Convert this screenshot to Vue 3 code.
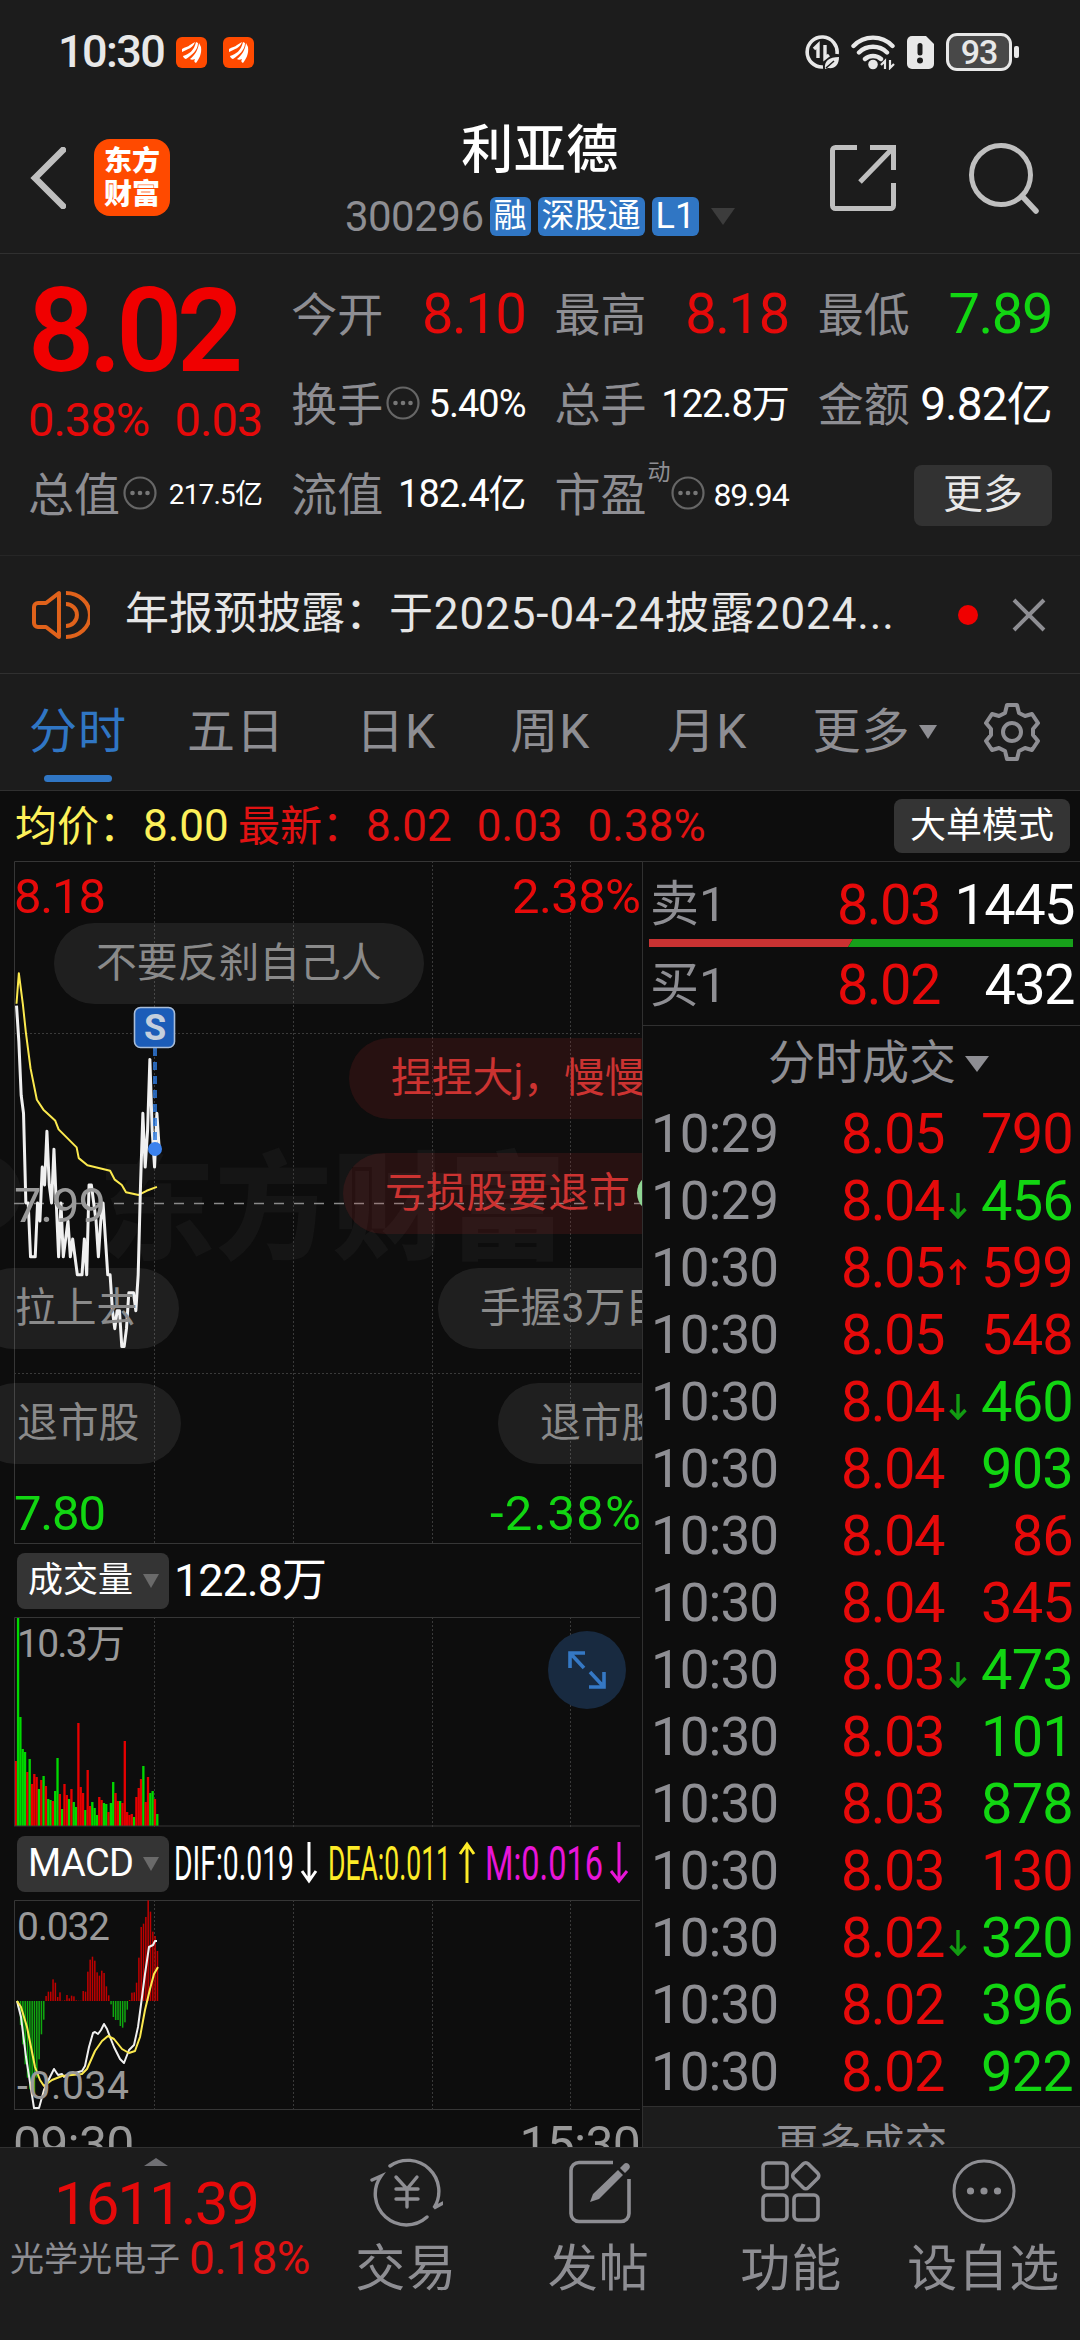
<!-- 个股行情页 - 分时走势 -->
<template>
  <div class="page">
    <!-- 系统状态栏 -->
    <div class="status-bar">
      <span class="clock">10:30</span>
      <svg v-for="n in 2" :key="n" class="app-badge" viewBox="0 0 31 31">
        <rect width="31" height="31" rx="6" fill="#ff4a00" />
        <path d="M6 12c3-2 6-2 8-4l5-3c-2 6-7 7-13 10zM7 19c6-2 11-5 13-14l2 1c0 7-6 12-12 16-1 0-3-2-3-3zM14 22c5-4 8-9 9-16l2 4c1 7-2 12-5 16-2-1-2-2-1-4-2 1-4 1-5 0z" fill="#fff" />
      </svg>
      <div class="status-icons">
        <svg class="icon-data" viewBox="0 0 34 34">
          <path d="M32 19A15 15 0 1 0 18 32" fill="none" stroke="#e8e8e8" stroke-width="3.6" />
          <path d="M9 14l4-4v13M24 20l-4 3V10" fill="none" stroke="#e8e8e8" stroke-width="3.4" />
          <path d="M20 34c-1-8 4-12 14-12 0 8-4 12-11 11z" fill="#e8e8e8" />
          <path d="M21 33l8-7" stroke="#1c1c1c" stroke-width="1.5" />
        </svg>
        <svg class="icon-wifi" viewBox="0 0 44 36">
          <g fill="none" stroke="#e8e8e8" stroke-width="4.4" stroke-linecap="round">
            <path d="M2.5 12a27 27 0 0 1 39 0M8 18.500a20 20 0 0 1 28 0M14 25a12 12 0 0 1 16 0" />
          </g>
          <circle cx="22" cy="30.500" r="4.800" fill="#e8e8e8" />
          <path d="M30 31l4-4v8M43 30l-4 4v-8" fill="none" stroke="#e8e8e8" stroke-width="2.2" />
        </svg>
        <svg class="icon-sim" viewBox="0 0 27 33">
          <path d="M5 0h14l8 8v20a5 5 0 0 1-5 5H5a5 5 0 0 1-5-5V5a5 5 0 0 1 5-5z" fill="#e8e8e8" />
          <path d="M13 9.500v7.500" stroke="#1c1c1c" stroke-width="5" stroke-linecap="round" />
          <circle cx="13" cy="24.500" r="3" fill="#1c1c1c" />
        </svg>
        <div class="battery"><span>93</span></div>
      </div>
    </div>

    <!-- 标题栏 -->
    <header class="header">
      <div class="header-left">
        <svg class="icon-back" viewBox="0 0 36 62">
          <path d="M33 3L5 31l28 28" fill="none" stroke="#bfbfbf" stroke-width="6.500" stroke-linecap="round" />
        </svg>
        <div class="logo"><span>东方</span><span>财富</span></div>
      </div>
      <div class="header-title">
        <h1>利亚德</h1>
        <div class="sub">
          <span class="code">300296</span>
          <span v-for="tag in tags" :key="tag" class="tag">{{ tag }}</span>
          <i class="sub-caret"></i>
        </div>
      </div>
      <div class="header-right">
        <svg class="icon-share" viewBox="0 0 66 66">
          <g fill="none" stroke="#bfbfbf" stroke-width="5">
            <path d="M27 2.500H5.500a3 3 0 0 0-3 3v55a3 3 0 0 0 3 3h55a3 3 0 0 0 3-3V38" />
            <path d="M40 2.500h23.500V25M62 4L30 37" />
          </g>
        </svg>
        <svg class="icon-search" viewBox="0 0 72 74">
          <circle cx="33" cy="34" r="29.500" fill="none" stroke="#bfbfbf" stroke-width="5" />
          <path d="M54 55l14 15" stroke="#bfbfbf" stroke-width="5.500" stroke-linecap="round" />
        </svg>
      </div>
    </header>

    <!-- 盘口数据 -->
    <section class="quote">
      <div class="quote-main">
        <div class="last-price">8.02</div>
        <div class="change"><span>0.38%</span><span>0.03</span></div>
      </div>
      <div v-for="item in quotes" :key="item.label" class="quote-item">
        <span class="label">{{ item.label }}</span>
        <sup v-if="item.sup">{{ item.sup }}</sup>
        <svg v-if="item.tip" class="icon-tip" viewBox="0 0 34 34">
          <circle cx="17" cy="17" r="15.500" fill="none" stroke="#666" stroke-width="2.200" />
          <circle v-for="x in [9.5, 17, 24.5]" :key="x" :cx="x" cy="17" r="2.300" fill="#777" />
        </svg>
        <span class="value" :class="[item.size, item.color]">{{ item.value }}</span>
      </div>
      <div class="more-cell"><span class="more-btn">更多</span></div>
    </section>

    <!-- 公告 -->
    <section class="notice">
      <svg class="icon-speaker" viewBox="0 0 58 50">
        <g fill="none" stroke="#e0621b" stroke-width="4" stroke-linejoin="round">
          <path d="M27 3v44L14 37H6a4 4 0 0 1-4-4V17a4 4 0 0 1 4-4h8z" />
          <path d="M34 3a24 22 0 0 1 0 44M34 14a11 11 0 0 1 0 22" />
        </g>
      </svg>
      <span class="notice-text">年报预披露：<em>于2025-04-24披露2024...</em></span>
      <i class="notice-dot"></i>
      <svg class="icon-close" viewBox="0 0 34 34">
        <path d="M2 2l30 30M32 2L2 32" stroke="#8e8e93" stroke-width="4" />
      </svg>
    </section>

    <!-- 周期切换 -->
    <nav class="tabs">
      <span v-for="(tab, i) in tabs" :key="tab" class="tab" :class="{ active: i === 0 }">{{ tab }}</span>
      <i class="tab-caret"></i>
      <svg class="icon-gear" viewBox="0 0 56 58">
        <g fill="none" stroke="#8e8e93" stroke-width="4" stroke-linejoin="round">
          <path d="M23 2h10l2 8 6 3 7-2 6 9-5 6v6l5 6-6 9-7-2-6 3-2 8H23l-2-8-6-3-7 2-6-9 5-6v-6l-5-6 6-9 7 2 6-3z" />
          <circle cx="28" cy="29" r="9" />
        </g>
      </svg>
    </nav>

    <div class="summary">
      <span class="avg"><em>均价：</em>8.00</span>
      <span class="latest"><em>最新：</em><b>8.02</b><b>0.03</b><b>0.38%</b></span>
      <span class="mode-btn">大单模式</span>
    </div>

    <div class="body">
      <div class="charts">
        <!-- 分时图 -->
        <div class="price-chart">
          <svg width="642" height="683" viewBox="0 0 642 683">
            <circle cx="-18" cy="332" r="39" fill="#161616" />
            <text x="98" y="389" class="watermark" textLength="468">东方财富</text>
            <path :d="gridPath(683)" class="grid" />
            <path d="M14 172.500H641M14 512.500H641" class="grid" />
            <path d="M14.500 683V.5H642M14 682.500H641" class="frame" />
            <path d="M14 342.500H641" stroke="#8a8a8a" stroke-width="1.6" stroke-dasharray="10 10" />
            <polyline :points="avgPoints" class="line yellow" />
            <polyline :points="pricePoints" class="line white thick" />
            <path d="M155 187V288" stroke="#2f7be0" stroke-width="4" stroke-dasharray="8 6" opacity=".8" />
            <circle cx="155" cy="288" r="7" fill="#3b82ee" />
            <rect x="134.500" y="146.500" width="40" height="40" rx="6" fill="#1b5cb8" stroke="#a9bdd8" stroke-width="1.6" />
            <text x="155" y="179" text-anchor="middle" class="sell-mark">S</text>
            <text x="14" y="52" class="axis red" textLength="92">8.18</text>
            <text x="641" y="52" class="axis red" text-anchor="end" textLength="129">2.38%</text>
            <text x="14" y="361" class="axis gray" textLength="92">7.99</text>
            <text x="14" y="669" class="axis green" textLength="92">7.80</text>
            <text x="641" y="669" class="axis green" text-anchor="end" textLength="151">-2.38%</text>
          </svg>
          <span v-for="b in bullets" :key="b.cls" class="bullet" :class="b.cls">{{ b.text }}<i v-if="b.emoji"></i></span>
        </div>

        <!-- 成交量 -->
        <div class="panel-head">
          <span class="picker">成交量<i></i></span>
          <span class="volume-total">122.8万</span>
        </div>
        <svg class="block" width="642" height="210" viewBox="0 0 642 210">
          <path :d="gridPath(210)" class="grid" />
          <rect v-for="(v, i) in volumes" :key="i" :x="14.6 + i * 2.32" :y="209 - Math.abs(v)" width="2.320" :height="Math.abs(v)" :fill="v > 0 ? '#e60000' : '#00d800'" />
          <path d="M14.500 209V.5H640M14 209H640" class="frame" />
          <text x="17" y="40" class="sub-axis" textLength="108">10.3万</text>
          <circle cx="587" cy="53" r="39" fill="#182a40" />
          <g fill="none" stroke="#3578c4" stroke-width="3.600">
            <path d="M585 36h-15v15M570 36l14 15M589 70h15V55M604 70l-14-15" />
          </g>
        </svg>

        <!-- MACD -->
        <div class="panel-head">
          <span class="picker macd">MACD<i></i></span>
          <svg class="block" width="466" height="56" viewBox="0 0 466 56">
            <g class="macd-values">
              <text x="0" y="44" fill="#fff" textLength="120" lengthAdjust="spacingAndGlyphs">DIF:0.019</text>
              <text x="154" y="44" fill="#fdeb27" textLength="123" lengthAdjust="spacingAndGlyphs">DEA:0.011</text>
              <text x="311" y="44" fill="#e815d8" textLength="118" lengthAdjust="spacingAndGlyphs">M:0.016</text>
            </g>
            <g fill="none" stroke-width="3">
              <path d="M135 6v38M128 35l7 10 7-10" stroke="#fff" />
              <path d="M293 47V8M286 18l7-10 7 10" stroke="#fdeb27" />
              <path d="M445 6v38M437 35l8 10 8-10" stroke="#e815d8" />
            </g>
          </svg>
        </div>
        <svg class="block" width="642" height="210" viewBox="0 0 642 210">
          <path :d="gridPath(210)" class="grid" />
          <path d="M14.500 210V.5H640M14 209.500H640" class="frame" />
          <rect v-for="(v, i) in macdBars" :key="i" :x="17.5 + i * 2.32" :y="v > 0 ? 101 - v / 3 : 101" width="1.500" :height="Math.abs(v) / 3" :fill="v > 0 ? '#c00000' : '#10a810'" />
          <polyline :points="difPoints" class="line white" />
          <polyline :points="deaPoints" class="line yellow" />
          <text x="17" y="40" class="sub-axis" textLength="93">0.032</text>
          <text x="17" y="199" class="sub-axis" textLength="112">-0.034</text>
        </svg>
        <div class="time-axis"><span>09:30</span><span>15:30</span></div>
      </div>

      <!-- 买卖盘与成交明细 -->
      <aside class="trades">
        <div class="book-row"><span class="side">卖1</span><span class="price">8.03</span><span class="lots">1445</span></div>
        <svg class="ratio" viewBox="0 0 424 8">
          <path d="M0 0h204l-5 8H0z" fill="#c93232" />
          <path d="M204 0h220v8H199z" fill="#17a01a" />
        </svg>
        <div class="book-row"><span class="side">买1</span><span class="price">8.02</span><span class="lots">432</span></div>
        <div class="trades-title">分时成交<i></i></div>
        <div class="trade-list">
          <div v-for="(t, i) in trades" :key="i" class="trade-row">
            <span class="time">{{ t[0] }}</span>
            <span class="price">{{ t[1] }}</span>
            <span class="arrow">
              <svg v-if="t[3]" :class="t[3]" viewBox="0 0 18 27">
                <path d="M9 1v24M1.500 17L9 25l7.500-8" fill="none" stroke-width="3.400" />
              </svg>
            </span>
            <span class="lots" :class="t[2] > 0 ? 'red' : 'green'">{{ Math.abs(t[2]) }}</span>
          </div>
        </div>
        <div class="more-trades">更多成交</div>
      </aside>
    </div>

    <!-- 底部操作栏 -->
    <footer class="footer">
      <div class="index-box">
        <i class="index-caret"></i>
        <div class="index-value">1611.39</div>
        <div class="index-name"><span>光学光电子</span><b>0.18%</b></div>
      </div>
      <div class="action">
        <svg viewBox="0 0 74 74">
          <g fill="none" stroke="#8e8e93" stroke-width="3.400" stroke-linecap="round">
            <path d="M21 12a31 31 0 0 1 44 42l9-5M58 63A31 31 0 0 1 12 22l-9 4" />
            <path d="M27 23l11 12 10-12M38 35v18M27 35h22M27 45h22" />
          </g>
        </svg>
        <span>交易</span>
      </div>
      <div class="action">
        <svg viewBox="0 0 74 74">
          <path d="M51 8.500H17a8 8 0 0 0-8 8v43a8 8 0 0 0 8 8h42a8 8 0 0 0 8-8V25" fill="none" stroke="#8e8e93" stroke-width="3.600" />
          <path d="M28 48l3-8 25-24 5 5-24 24zM58 14l4-4c3-3 8 2 5 5l-4 4z" fill="#8e8e93" />
        </svg>
        <span>发帖</span>
      </div>
      <div class="action">
        <svg viewBox="0 0 74 74">
          <g fill="none" stroke="#8e8e93" stroke-width="3.600">
            <rect x="9" y="9" width="24" height="25" rx="4" />
            <rect x="9" y="41" width="24" height="25" rx="4" />
            <rect x="40" y="41" width="24" height="25" rx="4" />
            <rect x="41.500" y="11.500" width="20.500" height="20.500" rx="3.500" transform="rotate(45 51.750 21.750)" />
          </g>
        </svg>
        <span>功能</span>
      </div>
      <div class="action">
        <svg viewBox="0 0 74 74">
          <circle cx="37" cy="37" r="30" fill="none" stroke="#8e8e93" stroke-width="3" />
          <circle v-for="x in [23.5, 37, 50.5]" :key="x" :cx="x" cy="37" r="3.600" fill="#8e8e93" />
        </svg>
        <span>设自选</span>
      </div>
    </footer>
  </div>
</template>

<script setup>
import { computed } from 'vue';

const tags = ['融', '深股通', 'L1'];
const tabs = ['分时', '五日', '日K', '周K', '月K', '更多'];

const quotes = [
  { label: '今开', value: '8.10', size: 'xl', color: 'red' },
  { label: '最高', value: '8.18', size: 'xl', color: 'red' },
  { label: '最低', value: '7.89', size: 'xl', color: 'green' },
  { label: '换手', value: '5.40%', size: 'md', tip: true },
  { label: '总手', value: '122.8万', size: 'md' },
  { label: '金额', value: '9.82亿', size: 'lg' },
  { label: '总值', value: '217.5亿', size: 'xs', tip: true },
  { label: '流值', value: '182.4亿', size: 'md' },
  { label: '市盈', value: '89.94', size: 'sm', sup: '动', tip: true },
];

// 弹幕
const bullets = [
  { cls: 'b1', text: '不要反刹自己人' },
  { cls: 'b2 hot', text: '捏捏大j，慢慢' },
  { cls: 'b3 hot', text: '亏损股要退市', emoji: true },
  { cls: 'b4', text: '拉上去' },
  { cls: 'b5', text: '手握3万目标' },
  { cls: 'b6', text: '退市股' },
  { cls: 'b7', text: '退市股' },
];

// 每分钟价格，单位为相对昨收 7.99 的分
const prices = [
  11, 9, 6, 5, 0, 0, -3, -3, -3, 0, -1, 2, 1, 4, 1, 0, 3, 0, -3, 0, -3,
  -2, -1, -3, -2, -3, -4, -4, -4, -2, -4, 1, 1, 0, -1, -3, -1, 0, -2, -4, -4,
  -6, -7, -6, -6, -8, -8, -7, -5, -5, -5, -6, -4, 1, 5, 2, 4, 8, 4, 2, 5, 3,
];

const averages = [
  [0, 11.1], [1, 12.8], [2.7, 11.1], [4, 9.5], [6, 7.5], [8.7, 5.75], [11.5, 5.2],
  [16.5, 4.6], [18, 4.1], [25.7, 3.1], [26.6, 2.5], [30.3, 2.1], [40, 1.8], [42, 1.3],
  [45, 1], [46.8, 0.6], [52.2, 0.45], [55.6, 0.68], [60, 0.9],
];

// 正数为红柱，负数为绿柱
const volumes = [
  65, -208, -109, -77, -74, 54, -67, 42, 52, 49, -37, 46, -50, 40, -27, -26, 25, -35, -68, 32, -17,
  42, 31, -27, 37, -24, -19, 103, 39, 33, -16, 56, 20, -24, -18, -11, 29, 26, -23, -22, 14,
  -23, -44, 33, 25, -25, 23, 85, 14, 11, 12, -9, 29, 38, 47, -60, 24, 49, -33, -35, 27, -12,
];

const macdBars = [
  -20, -72, -130, -190, -230, -265, -280, -278, -230, -175, -100, -56, 15, 28, 28, 65, 55, 12, 26, 1, 2,
  18, 8, 16, 14, 2, 1, 1, 30, 28, 88, 124, 133, 121, 86, 76, 91, 84, 44, 17, -10,
  -48, -57, -57, -75, -80, -64, -26, 3, 25, 26, 55, 130, 222, 232, 252, 302, 268, 208, 195, 150,
];

const dif = [
  [17, 101], [21, 117], [26, 157], [34, 208], [39, 208], [44, 190], [48, 181], [54, 169], [58, 175],
  [62, 174], [64, 177], [68, 174], [75, 173], [82, 171], [85, 166], [89, 147], [93, 133], [95, 132],
  [98, 134], [101, 130], [104, 124], [107, 129], [110, 137], [114, 147], [120, 159], [124, 163],
  [129, 150], [134, 145], [138, 127], [142, 97], [145, 74], [149, 47], [153, 45], [155, 41], [157, 41],
];

const dea = [
  [17, 101], [21, 107], [27, 127], [35, 167], [40, 180], [44, 186], [52, 180], [62, 176], [82, 174],
  [87, 169], [95, 151], [102, 141], [108, 136], [114, 139], [122, 149], [129, 153], [135, 151],
  [140, 137], [145, 110], [150, 89], [154, 74], [158, 67],
];

const trades = [
  ['10:29', '8.05', 790],
  ['10:29', '8.04', -456, 'down'],
  ['10:30', '8.05', 599, 'up'],
  ['10:30', '8.05', 548],
  ['10:30', '8.04', -460, 'down'],
  ['10:30', '8.04', -903],
  ['10:30', '8.04', 86],
  ['10:30', '8.04', 345],
  ['10:30', '8.03', -473, 'down'],
  ['10:30', '8.03', -101],
  ['10:30', '8.03', -878],
  ['10:30', '8.03', 130],
  ['10:30', '8.02', -320, 'down'],
  ['10:30', '8.02', -396],
  ['10:30', '8.02', -922],
];

const toPoint = (minute, cents) => `${16.5 + minute * 2.34},${342 - cents * 17.95}`;
const pricePoints = computed(() => prices.map((v, i) => toPoint(i, v)).join(' '));
const avgPoints = computed(() => averages.map(([m, v]) => toPoint(m, v)).join(' '));
const difPoints = computed(() => dif.join(' '));
const deaPoints = computed(() => dea.join(' '));

const gridPath = (height) => [154.5, 293.5, 432.5, 570.5].map((x) => `M${x} 0V${height}`).join('');
</script>

<style>
body {
  background: #1c1c1c;
}
</style>

<style scoped>
.page {
  width: 1080px;
  height: 2340px;
  overflow: hidden;
  background: #1c1c1c;
  color: #fff;
  font-family: Roboto, 'Noto Sans CJK SC', sans-serif;
  line-height: 1.2;
  display: flex;
  flex-direction: column;
}

.page * {
  box-sizing: border-box;
}

i,
em {
  font-style: normal;
}

b {
  font-weight: 400;
}

span {
  white-space: nowrap;
}

.red {
  color: #e60a0a;
  fill: #e60a0a;
}

.green {
  color: #12d612;
  fill: #12d612;
}

.status-bar {
  height: 104px;
  padding: 0 61px 0 58px;
  display: flex;
  align-items: center;
}

.clock {
  width: 118px;
  font-size: 45px;
  letter-spacing: -1.6px;
  color: #e8e8e8;
  font-weight: 500;
}

.app-badge {
  width: 31px;
  height: 31px;
  margin-right: 16px;
}

.status-icons {
  margin-left: auto;
  display: flex;
  align-items: center;
  gap: 12px;
}

.icon-data {
  width: 34px;
  height: 34px;
}

.icon-wifi {
  width: 44px;
  height: 36px;
}

.icon-sim {
  width: 27px;
  height: 33px;
}

.battery {
  position: relative;
  width: 66px;
  height: 38px;
  margin-right: 7px;
  border: 3px solid #e8e8e8;
  border-radius: 11px;
  background: #484848;
  display: flex;
  align-items: center;
  justify-content: center;
  font-size: 34px;
  font-weight: 500;
  line-height: 1;
  letter-spacing: -1px;
  color: #e8e8e8;
}

.battery::after {
  content: '';
  position: absolute;
  right: -10px;
  top: 10px;
  width: 5px;
  height: 12px;
  border-radius: 2px;
  background: #e8e8e8;
}

.header {
  height: 150px;
  padding: 0 40px 0 30px;
  border-bottom: 1px solid #303030;
  display: grid;
  grid-template-columns: 1fr 400px 1fr;
}

.header-left,
.header-right {
  display: flex;
  align-items: center;
  padding-bottom: 2px;
}

.icon-back {
  width: 36px;
  height: 62px;
  margin-right: 28px;
}

.logo {
  width: 76px;
  height: 77px;
  border-radius: 16px;
  background: #ff4a00;
  display: flex;
  flex-direction: column;
  align-items: center;
  justify-content: center;
  font-size: 28px;
  font-weight: 900;
  line-height: 33px;
}

.header-title {
  display: flex;
  flex-direction: column;
  padding: 14px 0 0 10px;
}

h1 {
  margin: 0;
  font-size: 52px;
  line-height: 66px;
  font-weight: 500;
  letter-spacing: 0.5px;
  text-align: center;
}

.sub {
  display: flex;
  align-items: center;
  justify-content: center;
  height: 39px;
  margin-top: 13px;
}

.code {
  font-size: 42px;
  line-height: 39px;
  letter-spacing: -0.5px;
  color: #8e8e93;
  margin-right: 6px;
}

.tag {
  height: 39px;
  padding: 0 4px;
  margin-right: 7px;
  border-radius: 6px;
  background: #3076c4;
  font-size: 33px;
  line-height: 38px;
}

.tag:nth-of-type(4) {
  font-size: 36px;
}

.sub-caret {
  margin-left: 5px;
  border: 12px solid transparent;
  border-top: 17px solid #3c3c3c;
  border-bottom: 0;
}

.header-right {
  justify-content: flex-end;
}

.icon-share {
  width: 66px;
  height: 66px;
  margin-right: 72px;
}

.icon-search {
  width: 72px;
  height: 74px;
}

.quote {
  height: 302px;
  padding: 16px 28px 0 28px;
  border-bottom: 1px solid #262626;
  display: grid;
  grid-template-columns: repeat(4, 1fr);
  grid-template-rows: repeat(3, 90px);
  column-gap: 29px;
}

.quote-main {
  grid-row: 1 / 3;
}

.last-price {
  height: 117px;
  font-size: 116px;
  line-height: 123px;
  font-weight: 600;
  letter-spacing: -5.5px;
  color: #f00000;
}

.change {
  display: flex;
  justify-content: space-between;
  font-size: 47px;
  line-height: 66px;
  letter-spacing: -1px;
  color: #e60a0a;
}

.quote-item {
  display: flex;
  align-items: center;
}

.quote-item:nth-of-type(8) {
  grid-column: 1;
}

.label {
  font-size: 46px;
  line-height: 60px;
  color: #8e8e93;
}

sup {
  align-self: flex-start;
  margin: 6px -3px 0 1px;
  font-size: 23px;
  line-height: 34px;
  color: #8e8e93;
}

.icon-tip {
  flex: none;
  width: 34px;
  height: 34px;
  margin: -4px 0 0 3px;
}

.value {
  margin-left: auto;
}

.value.xl {
  font-size: 56px;
  letter-spacing: -1.4px;
}

.value.lg {
  font-size: 46px;
  letter-spacing: -0.8px;
}

.value.md {
  font-size: 38px;
  letter-spacing: -1px;
}

.value.sm {
  font-size: 32px;
  letter-spacing: -1px;
}

.value.xs {
  font-size: 28px;
  letter-spacing: -0.8px;
}

.more-cell {
  display: flex;
  align-items: center;
  justify-content: flex-end;
}

.more-btn {
  width: 138px;
  height: 61px;
  border-radius: 8px;
  background: #323232;
  color: #e8e8e8;
  font-size: 40px;
  line-height: 60px;
  text-align: center;
}

.notice {
  height: 118px;
  padding: 0 34px 0 32px;
  border-bottom: 1px solid #303030;
  display: flex;
  align-items: center;
}

.icon-speaker {
  width: 58px;
  height: 50px;
}

.notice-text {
  width: 832px;
  padding-left: 35px;
  font-size: 44px;
  color: #e6e6e6;
}

.notice-text em {
  letter-spacing: 0.9px;
}

.notice-dot {
  width: 20px;
  height: 20px;
  margin: 0 34px 0 37px;
  border-radius: 50%;
  background: #f00000;
}

.icon-close {
  width: 34px;
  height: 34px;
}

.tabs {
  height: 117px;
  padding: 0 40px 0 29px;
  border-bottom: 1px solid #303030;
  display: flex;
  align-items: center;
  color: #8e8e93;
  font-size: 48px;
  letter-spacing: 1px;
}

.tab {
  position: relative;
  margin-right: 74px;
}

.tab:nth-child(1) {
  margin-right: 60px;
}

.tab:nth-child(2) {
  margin-right: 71px;
}

.tab:nth-child(4) {
  margin-right: 77px;
}

.tab:nth-child(5) {
  margin-right: 65px;
}

.tab:nth-child(6) {
  margin-right: 9px;
}

.tab.active {
  color: #3076c4;
}

.tab.active::after {
  content: '';
  position: absolute;
  left: 15px;
  bottom: -21px;
  width: 68px;
  height: 7px;
  border-radius: 4px;
  background: #3076c4;
}

.tab-caret {
  border: 9px solid transparent;
  border-top: 14px solid #8e8e93;
  border-bottom: 0;
}

.icon-gear {
  width: 56px;
  height: 58px;
  margin-left: auto;
}

.summary {
  height: 70px;
  padding: 0 10px 0 15px;
  background: #0d0d0d;
  display: flex;
  align-items: center;
  font-size: 44px;
}

.summary em {
  display: inline-block;
  width: 128px;
  font-size: 42px;
}

.avg {
  width: 223px;
  color: #fdf05a;
}

.latest {
  color: #e01212;
}

.latest b {
  margin-right: 25px;
}

.mode-btn {
  width: 176px;
  height: 54px;
  margin-left: auto;
  border-radius: 8px;
  background: #343434;
  font-size: 36px;
  line-height: 54px;
  text-align: center;
}

.body {
  height: 1286px;
  overflow: hidden;
  background: #0d0d0d;
  display: flex;
}

.charts {
  width: 642px;
}

.block,
.price-chart svg {
  display: block;
}

.price-chart {
  position: relative;
  height: 683px;
  overflow: hidden;
}

.grid {
  fill: none;
  stroke: #3a3a3a;
  stroke-width: 1;
  stroke-dasharray: 2 2;
}

.frame {
  fill: none;
  stroke: #363636;
  stroke-width: 1;
}

.line {
  fill: none;
  stroke-width: 2;
  stroke-linejoin: round;
}

.line.thick {
  stroke-width: 3;
}

.line.white {
  stroke: #f0f0f0;
}

.line.yellow {
  stroke: #fbe94e;
}

.watermark {
  font-size: 117px;
  font-weight: 900;
  fill: #151515;
}

.sell-mark {
  font-size: 36px;
  font-weight: 700;
  fill: #c4cfdd;
}

.axis {
  font-size: 49px;
}

.axis.gray {
  fill: #999;
}

.sub-axis {
  font-size: 39px;
  fill: #999;
}

/* 弹幕浮在走势图上方 */
.bullet {
  position: absolute;
  height: 81px;
  padding: 0 42px;
  border-radius: 41px;
  background: rgba(255, 255, 255, 0.075);
  color: #8a8a8a;
  font-size: 40.8px;
  line-height: 81px;
}

.bullet.hot {
  background: rgba(200, 40, 40, 0.14);
  color: #cc3331;
}

.bullet i {
  display: inline-block;
  width: 40px;
  height: 40px;
  margin-left: 7px;
  border-radius: 50%;
  background: #8fd694;
  vertical-align: -6px;
}

.b1 {
  left: 54px;
  top: 62px;
}

.b2 {
  left: 349px;
  top: 177px;
}

.b3 {
  left: 343px;
  top: 292px;
}

.b4 {
  left: -27px;
  top: 407px;
}

.b5 {
  left: 438px;
  top: 407px;
}

.b6 {
  left: -25px;
  top: 522px;
}

.b7 {
  left: 498px;
  top: 522px;
}

.panel-head {
  height: 73px;
  padding-left: 17px;
  display: flex;
  align-items: center;
}

.picker {
  width: 152px;
  height: 56px;
  margin-right: 5px;
  padding: 0 10px 0 11px;
  border-radius: 8px;
  background: #343434;
  display: flex;
  align-items: center;
  justify-content: space-between;
  font-size: 35px;
}

.picker.macd {
  font-size: 38px;
  letter-spacing: -0.6px;
}

.picker i {
  border: 8px solid transparent;
  border-top: 14px solid #6a6a6a;
  border-bottom: 0;
}

.volume-total {
  font-size: 45px;
  letter-spacing: -1px;
}

.macd-values {
  font-size: 48px;
}

.time-axis {
  height: 37px;
  padding: 12px 2px 0 13px;
  display: flex;
  justify-content: space-between;
  font-size: 50px;
  line-height: 46px;
  letter-spacing: -0.8px;
  color: #999;
}

.trades {
  width: 438px;
  border-left: 1px solid #303030;
  border-top: 1px solid #303030;
}

.book-row {
  display: flex;
  align-items: center;
  height: 77px;
  padding: 10px 6px 0 7px;
  font-size: 56px;
  letter-spacing: -1.6px;
}

.book-row .side {
  width: 187px;
  font-size: 49px;
  letter-spacing: 0;
  color: #8e8e93;
}

.price {
  color: #e60a0a;
}

.book-row .lots {
  margin-left: auto;
}

.ratio {
  display: block;
  width: 424px;
  height: 8px;
  margin-left: 6px;
}

.ratio + .book-row {
  height: 78px;
  padding-top: 0;
}

.trades-title {
  height: 76px;
  border-top: 1px solid #303030;
  display: flex;
  align-items: center;
  justify-content: center;
  padding-left: 34px;
  font-size: 47px;
  color: #8e8e93;
}

.trades-title i {
  margin-left: 9px;
  border: 12px solid transparent;
  border-top: 16px solid #8e8e93;
  border-bottom: 0;
}

.trade-row {
  height: 67px;
  padding: 0 7px 0 8px;
  display: flex;
  align-items: center;
  font-size: 56px;
  letter-spacing: -1.6px;
}

.time {
  width: 190px;
  font-size: 53px;
  letter-spacing: -1px;
  color: #8e8e93;
}

.arrow {
  width: 20px;
  height: 27px;
  margin: 8px 0 0 5px;
}

.arrow svg {
  display: block;
  width: 18px;
  height: 27px;
}

.arrow .down {
  stroke: #129c12;
}

.arrow .up {
  stroke: #e60a0a;
  transform: rotate(180deg);
}

.trade-row .lots {
  margin-left: auto;
  letter-spacing: -0.8px;
}

.more-trades {
  height: 80px;
  border-top: 1px solid #303030;
  background: #1c1c1c;
  font-size: 43px;
  line-height: 76px;
  text-align: center;
  color: #8e8e93;
}

.footer {
  height: 193px;
  border-top: 1px solid #303030;
  background: #1c1c1c;
  display: flex;
}

.index-box {
  width: 310px;
  display: flex;
  flex-direction: column;
  align-items: center;
  padding: 10px 0 0 2px;
}

.index-caret {
  border: 12px solid transparent;
  border-bottom: 8px solid #6f6f73;
  border-top: 0;
}

.index-value {
  height: 70px;
  margin-top: 3px;
  font-size: 60px;
  line-height: 70px;
  letter-spacing: -2px;
  color: #e60a0a;
}

.index-name {
  display: flex;
  align-items: center;
  gap: 9px;
  height: 46px;
  margin: -3px 0 0 8px;
  font-size: 34px;
  color: #8e8e93;
}

.index-name b {
  font-size: 46px;
  letter-spacing: -0.5px;
  color: #e01212;
}

.action {
  flex: 1;
  display: flex;
  flex-direction: column;
  align-items: center;
  padding-top: 6px;
  font-size: 50px;
  line-height: 60px;
  letter-spacing: 1px;
  color: #8e8e93;
}

.action svg {
  width: 74px;
  height: 74px;
  margin-bottom: 11px;
}
</style>
